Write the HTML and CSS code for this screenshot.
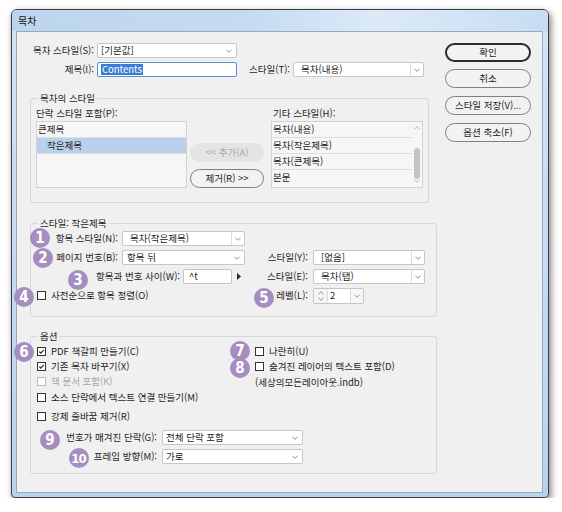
FILE: index.html
```html
<!DOCTYPE html>
<html lang="ko">
<head>
<meta charset="utf-8">
<title>목차</title>
<link rel="stylesheet" href="styles.css">
</head>
<body>
<div class="window">
  <div class="titlebar">목차</div>
  <div class="client">
    <div class="main">
      <div class="toprow">
        <span class="lbl lbl-top">목차 스타일(S):</span>
        <div class="select w140"><span class="val">[기본값]</span><svg class="chev" viewBox="0 0 7 4"><path d="M.5 .5L3.5 3.5L6.5 .5"/></svg></div>
      </div>
      <div class="toprow r-gap">
        <span class="lbl lbl-top">제목(I):</span>
        <div class="input focus w140"><span class="seltext">Contents</span></div>
        <span class="lbl lbl-t">스타일(T):</span>
        <div class="select combo w131"><span class="val">목차(내용)</span><span class="arrow"><svg class="chev" viewBox="0 0 7 4"><path d="M.5 .5L3.5 3.5L6.5 .5"/></svg></span></div>
      </div>

      <fieldset class="group g1">
        <legend>목차의 스타일</legend>
        <div class="g1body">
          <div class="col-left">
            <div class="cap">단락 스타일 포함(P):</div>
            <div class="list">
              <div class="item">큰제목</div>
              <div class="item sel indent">작은제목</div>
            </div>
          </div>
          <div class="col-mid">
            <div class="btn disabled">&lt;&lt; 추가(A)</div>
            <div class="btn">제거(R) &gt;&gt;</div>
          </div>
          <div class="col-right">
            <div class="cap cap-r">기타 스타일(H):</div>
            <div class="list list-r">
              <div class="items">
                <div class="item">목차(내용)</div>
                <div class="item">목차(작은제목)</div>
                <div class="item">목차(큰제목)</div>
                <div class="item last">본문</div>
              </div>
              <div class="sb">
                <svg class="chev up" viewBox="0 0 7 4"><path d="M.5 3.5L3.5 .5L6.5 3.5"/></svg>
                <div class="thumb"></div>
                <svg class="chev down" viewBox="0 0 7 4"><path d="M.5 .5L3.5 3.5L6.5 .5"/></svg>
              </div>
            </div>
          </div>
        </div>
      </fieldset>

      <fieldset class="group g2">
        <legend>스타일: 작은제목</legend>
        <div class="srow">
          <div class="half">
            <span class="lbl mr4">항목 스타일(N):</span>
            <div class="select combo w123"><span class="val">목차(작은제목)</span><span class="arrow"><svg class="chev" viewBox="0 0 7 4"><path d="M.5 .5L3.5 3.5L6.5 .5"/></svg></span></div>
          </div>
        </div>
        <div class="srow gap">
          <div class="half">
            <span class="lbl mr4">페이지 번호(B):</span>
            <div class="select w123 pl5"><span class="val">항목 뒤</span><svg class="chev" viewBox="0 0 7 4"><path d="M.5 .5L3.5 3.5L6.5 .5"/></svg></div>
          </div>
          <div class="rhalf">
            <span class="lbl rl">스타일(Y):</span>
            <div class="select combo w112"><span class="val">[없음]</span><span class="arrow"><svg class="chev" viewBox="0 0 7 4"><path d="M.5 .5L3.5 3.5L6.5 .5"/></svg></span></div>
          </div>
        </div>
        <div class="srow gap">
          <div class="half">
            <span class="lbl mr3">항목과 번호 사이(W):</span>
            <div class="input w49"><span class="val">^t</span></div>
            <span class="tri"><svg viewBox="0 0 4 7"><path d="M0 0L4 3.5L0 7Z"/></svg></span>
          </div>
          <div class="rhalf">
            <span class="lbl rl">스타일(E):</span>
            <div class="select combo w112"><span class="val">목차(탭)</span><span class="arrow"><svg class="chev" viewBox="0 0 7 4"><path d="M.5 .5L3.5 3.5L6.5 .5"/></svg></span></div>
          </div>
        </div>
        <div class="srow gap h16">
          <div class="half start">
            <span class="cb"></span><span>사전순으로 항목 정렬(O)</span>
          </div>
          <div class="rhalf">
            <span class="lbl rl">레벨(L):</span>
            <div class="spin">
              <span class="updown">
                <svg class="chev" viewBox="0 0 7 4"><path d="M.5 3.5L3.5 .5L6.5 3.5"/></svg>
                <svg class="chev" viewBox="0 0 7 4"><path d="M.5 .5L3.5 3.5L6.5 .5"/></svg>
              </span>
              <span class="num">2</span>
              <span class="arrow"><svg class="chev" viewBox="0 0 7 4"><path d="M.5 .5L3.5 3.5L6.5 .5"/></svg></span>
            </div>
          </div>
        </div>
      </fieldset>

      <fieldset class="group g3">
        <legend>옵션</legend>
        <div class="opts">
          <div class="optcol left">
            <div class="orow"><span class="cb checked"><svg viewBox="0 0 9 9"><path d="M1.6 4.6L3.6 6.5L7.4 2.4"/></svg></span><span>PDF 책갈피 만들기(C)</span></div>
            <div class="orow"><span class="cb checked"><svg viewBox="0 0 9 9"><path d="M1.6 4.6L3.6 6.5L7.4 2.4"/></svg></span><span>기존 목차 바꾸기(X)</span></div>
            <div class="orow dis"><span class="cb"></span><span>책 문서 포함(K)</span></div>
            <div class="orow m1"><span class="cb"></span><span>소스 단락에서 텍스트 연결 만들기(M)</span></div>
            <div class="orow m4"><span class="cb"></span><span>강제 줄바꿈 제거(R)</span></div>
          </div>
          <div class="optcol">
            <div class="orow"><span class="cb"></span><span>나란히(U)</span></div>
            <div class="orow"><span class="cb"></span><span>숨겨진 레이어의 텍스트 포함(D)</span></div>
            <div class="orow m1"><span>(세상의모든레이아웃.indb)</span></div>
          </div>
        </div>
        <div class="frow first">
          <span class="lbl fl">번호가 매겨진 단락(G):</span>
          <div class="select w141"><span class="val">전체 단락 포함</span><svg class="chev" viewBox="0 0 7 4"><path d="M.5 .5L3.5 3.5L6.5 .5"/></svg></div>
        </div>
        <div class="frow">
          <span class="lbl fl">프레임 방향(M):</span>
          <div class="select w141"><span class="val">가로</span><svg class="chev" viewBox="0 0 7 4"><path d="M.5 .5L3.5 3.5L6.5 .5"/></svg></div>
        </div>
      </fieldset>
    </div>

    <div class="btns">
      <div class="btn big default">확인</div>
      <div class="btn big b-cancel">취소</div>
      <div class="btn big b-save">스타일 저장(V)...</div>
      <div class="btn big b-less">옵션 축소(F)</div>
    </div>

    <span class="badge b1">1</span>
    <span class="badge b2">2</span>
    <span class="badge b3">3</span>
    <span class="badge b4">4</span>
    <span class="badge b5">5</span>
    <span class="badge b6">6</span>
    <span class="badge b7">7</span>
    <span class="badge b8">8</span>
    <span class="badge b9">9</span>
    <span class="badge b10">10</span>
  </div>
</div>
</body>
</html>
```

FILE: styles.css
```css
* { box-sizing: border-box; }

body {
  margin: 0;
  padding: 9px 0 0 11px;
  background: #ffffff;
  font-family: "Noto Sans CJK KR", "Noto Sans", sans-serif;
  font-size: 9.5px;
  line-height: 1.2;
  color: #1c1c1c;
}

.window {
  width: 538px;
  height: 489px;
  border: 1px solid #3c3c3c;
  border-radius: 6px 6px 4px 4px;
  background: linear-gradient(to bottom, #d3e4f6, #bad3ed);
  box-shadow: 2px 3px 7px rgba(0, 0, 0, 0.5);
  display: flex;
  flex-direction: column;
}

.titlebar {
  height: 21px;
  line-height: 21px;
  padding-left: 6px;
  font-size: 10px;
  color: #111;
  border-radius: 5px 5px 0 0;
  background: linear-gradient(to right, #bcd5ee 0%, #c6dbf1 45%, #dceaf8 68%, #c8ddf2 100%);
}

.client {
  position: relative;
  margin: 0 5px 4px 4px;
  height: 462px;
  border: 1px solid #98a9bb;
  background: #f0f0f0;
  padding: 11px 0 0 13px;
  display: flex;
  gap: 8px;
}

.main { width: 407px; }

/* ---------- generic controls ---------- */
.lbl { white-space: nowrap; }

.select, .input {
  display: flex;
  align-items: center;
  height: 15px;
  border: 1px solid #c6c6c6;
  border-radius: 2px;
  background: #fff;
  white-space: nowrap;
  flex: none;
}
.select { justify-content: space-between; padding: 0 4px 0 3px; }
.select.pl5 { padding-left: 4px; }
.select.combo { padding: 0 0 0 7px; }
.select .arrow, .spin .arrow {
  width: 13px;
  align-self: stretch;
  border-left: 1px solid #dcdcdc;
  display: flex;
  align-items: center;
  justify-content: center;
}

.chev {
  width: 6px;
  height: 4px;
  fill: none;
  stroke: #7c7c7c;
  stroke-width: 1;
  flex: none;
}

.input { padding-left: 3px; }
.input.focus { border-color: #5a8fcf; }
.seltext { background: #3a7dd6; color: #fff; padding: 0 1px; line-height: 11px; }

.w140 { width: 140px; }
.w131 { width: 131px; }
.w123 { width: 123px; }
.w112 { width: 112px; }
.w141 { width: 141px; }
.w49 { width: 49px; padding-left: 5px; }

/* ---------- top rows ---------- */
.toprow { display: flex; align-items: center; height: 15px; }
.toprow.r-gap { margin-top: 4px; }
.lbl-top { width: 64px; text-align: right; margin-right: 3px; }
.lbl-t { width: 41px; margin-left: 12px; margin-right: 3px; text-align: right; }

/* ---------- group boxes ---------- */
.group {
  min-width: 0;
  border: 1px solid #d7d7d7;
  border-radius: 3px;
}
.group > legend {
  padding: 0 2px;
  line-height: 12px;
}

.group.g1 { margin: 15px 0 0; width: 399px; padding: 3px 5px 14px 5px; }
.group.g1 > legend { margin-left: 2px; }
.g1body { display: flex; }
.col-left { width: 151px; }
.col-mid {
  width: 74px;
  margin-left: 3px;
  display: flex;
  flex-direction: column;
  justify-content: flex-end;
  gap: 7px;
}
.col-right { width: 152px; margin-left: 7px; }
.cap { height: 12px; line-height: 12px; margin-bottom: 2px; }
.cap-r { padding-left: 2px; }

.list {
  height: 67px;
  border: 1px solid #d2d2d2;
  background: #f6f6f6;
  overflow: hidden;
}
.item {
  height: 16px;
  line-height: 15px;
  padding-left: 1px;
  border-bottom: 1px solid #dddddd;
  white-space: nowrap;
}
.item.sel { background: #b9d1ea; }
.item.indent { padding-left: 10px; }
.item.last { border-bottom: none; }

.list-r { display: flex; }
.items { flex: 1; }
.sb {
  width: 10px;
  display: flex;
  flex-direction: column;
  align-items: center;
  padding: 4px 0 4px;
}
.sb .thumb {
  width: 6px;
  height: 31px;
  margin-top: 18px;
  border-radius: 3px;
  background: #c3c3c3;
}
.sb .down { margin-top: auto; }
.sb .chev { stroke: #a8a8a8; }

.btn {
  height: 19px;
  border: 1px solid #808080;
  border-radius: 10px;
  background: #f2f2f2;
  display: flex;
  align-items: center;
  justify-content: center;
  white-space: nowrap;
}
.btn.disabled { border-color: #e4e4e4; background: #e4e4e4; color: #a7a7a7; }

/* ---------- group 2 ---------- */
.group.g2 { margin: 14px 0 0; width: 407px; padding: 2px 11px 12px 6px; }
.group.g2 > legend { margin-left: 1px; }
.srow { display: flex; align-items: center; height: 15px; }
.srow.gap { margin-top: 4px; }
.srow.h16 { height: 16px; }
.half {
  width: 208px;
  display: flex;
  align-items: center;
  justify-content: flex-end;
}
.half.start { justify-content: flex-start; }
.mr4 { margin-right: 4px; }
.mr3 { margin-right: 3px; }
.tri { width: 13px; padding-left: 5px; display: flex; align-items: center; }
.tri svg { width: 4px; height: 7px; fill: #2a2a2a; }
.rhalf { display: flex; align-items: center; margin-left: 5px; }
.rl { width: 58px; text-align: right; margin-right: 5px; }

.spin {
  display: flex;
  width: 51px;
  height: 16px;
  border: 1px solid #c6c6c6;
  border-radius: 2px;
  background: #fff;
}
.updown {
  width: 14px;
  border-right: 1px solid #dcdcdc;
  background: #f3f3f3;
  display: flex;
  flex-direction: column;
  align-items: center;
  justify-content: center;
  gap: 2px;
}
.num { flex: 1; padding-left: 2px; display: flex; align-items: center; }
.spin .arrow { background: #f7f7f7; }

/* ---------- checkboxes ---------- */
.cb {
  width: 9px;
  height: 9px;
  border: 1px solid #333;
  background: #fff;
  margin-right: 5px;
  flex: none;
  display: flex;
}
.cb svg { width: 7px; height: 7px; fill: none; stroke: #2a2a2a; stroke-width: 1.6; }
.dis { color: #a6a6a6; }
.dis .cb { border-color: #bdbdbd; }

/* ---------- group 3 ---------- */
.group.g3 { margin: 13px 0 0; width: 407px; padding: 2px 11px 9px 6px; }
.group.g3 > legend { margin-left: 1px; }
.opts { display: flex; }
.optcol.left { width: 218px; }
.orow { display: flex; align-items: center; height: 15px; white-space: nowrap; }
.orow.m1 { margin-top: 1px; }
.orow.m4 { margin-top: 4px; }
.frow { display: flex; align-items: center; height: 15px; margin-top: 4px; }
.frow.first { margin-top: 6px; }
.fl { width: 120px; text-align: right; margin-right: 5px; }

/* ---------- right buttons ---------- */
.btns { width: 86px; display: flex; flex-direction: column; }
.btn.big { height: 19px; }
.btn.default { border: 2px solid #2b2b2b; }
.b-cancel { margin-top: 7px; }
.b-save { margin-top: 8px; }
.b-less { margin-top: 8px; }

/* ---------- annotation badges ---------- */
.badge {
  position: absolute;
  width: 20px;
  height: 20px;
  border-radius: 50%;
  background: #a68dc0;
  color: #fff;
  font-family: "DejaVu Sans Condensed", "Liberation Sans Narrow", "DejaVu Sans", sans-serif;
  font-weight: bold;
  font-size: 15px;
  line-height: 1;
  display: flex;
  align-items: center;
  justify-content: center;
}
.b10 { font-size: 13px; letter-spacing: -1px; padding-right: 1px; }
.b1 { left: 13px; top: 196px; }
.b2 { left: 16px; top: 216px; }
.b3 { left: 51px; top: 238px; }
.b4 { left: -3px; top: 255px; }
.b5 { left: 237px; top: 256px; }
.b6 { left: -3px; top: 310px; }
.b7 { left: 213px; top: 309px; }
.b8 { left: 213px; top: 326px; }
.b9 { left: 23px; top: 398px; }
.b10 { left: 52px; top: 416px; }
```
